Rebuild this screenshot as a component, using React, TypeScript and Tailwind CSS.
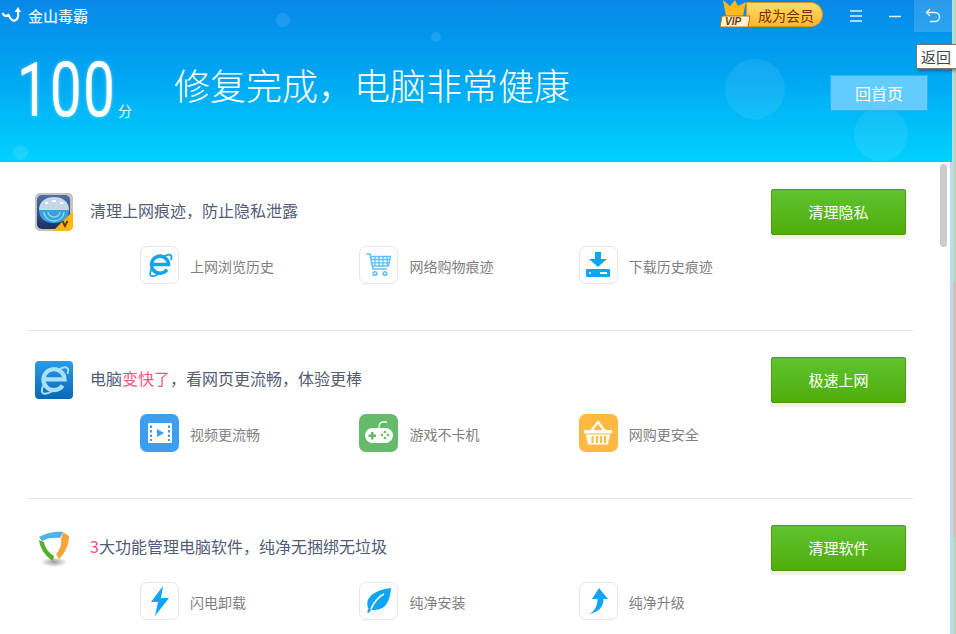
const cjk = "font-['Noto_Sans_CJK_SC','Liberation_Sans',sans-serif]";

function PrivacyIcon() {
  return (
    <svg width="38" height="38" viewBox="0 0 38 38">
      <defs>
        <linearGradient id="pv" x1="0" y1="0" x2="0" y2="1">
          <stop offset="0" stopColor="#4f6fa8" />
          <stop offset="1" stopColor="#1d2f63" />
        </linearGradient>
      </defs>
      <rect x="0" y="0" width="38" height="38" rx="5" fill="#c4c2bf" />
      <rect x="2" y="2" width="33" height="34" rx="5" fill="url(#pv)" />
      <path d="M4 17C4 8 11 4 19 4s15 4 15 13z" fill="#c4d8ea" />
      <path d="M4 17h30c0 9-7 13-15 13S4 26 4 17z" fill="#35a3de" />
      <path d="M9 19a10 9 0 0 0 20 0M13 19a6 5 0 0 0 12 0" fill="none" stroke="#8fd6f2" strokeWidth="1.300" />
      <path d="M10 10h3M17 8h4M25 10h3" stroke="#ffffff" strokeWidth="2" />
      <path d="M38 18v15a5 5 0 0 1-5 5H18z" fill="#fdb813" />
      <path d="M27.500 28l2.500 5 2.500-5" fill="none" stroke="#6b3d0a" strokeWidth="2" />
    </svg>
  );
}

function IeLargeIcon() {
  return (
    <svg width="38" height="38" viewBox="0 0 38 38">
      <defs>
        <linearGradient id="ieb" x1="0" y1="0" x2="0" y2="1">
          <stop offset="0" stopColor="#2c9be6" />
          <stop offset="1" stopColor="#0a67b8" />
        </linearGradient>
      </defs>
      <rect width="38" height="38" rx="4" fill="url(#ieb)" />
      <g transform="translate(3 3) scale(1.230)" fill="none" stroke="#a6e1f7">
        <path d="M20 17.500A8.500 8.500 0 1 1 21.500 12.500H6" strokeWidth="3.500" />
        <path d="M5 16C1 24 4 26 11 22.500M17 4.500c5-3 9-2.500 7 3.500" strokeWidth="1.600" />
      </g>
    </svg>
  );
}

function ShieldIcon() {
  return (
    <svg width="38" height="38" viewBox="0 0 38 38">
      <defs>
        <radialGradient id="sd">
          <stop offset="0" stopColor="#9a9a9a" />
          <stop offset="1" stopColor="#ffffff" />
        </radialGradient>
      </defs>
      <ellipse cx="19" cy="33" rx="13" ry="5" fill="url(#sd)" />
      <path d="M4 8C12 3 24 2 28 3l-3 6C18 8 12 9 7 12z" fill="#4cb4ea" />
      <path d="M28 3l6 4c0 9-4 17-10 23l-3-5c4-4 6-10 5-15z" fill="#f6a537" />
      <path d="M4 11l5 2c1 6 5 11 10 14l-1 5C10 27 5 19 4 11z" fill="#58ad2a" />
    </svg>
  );
}

function IeGlyph() {
  return (
    <svg width="26" height="26" viewBox="0 0 26 26" fill="none" stroke="#0ea5f5">
      <path d="M20 17.500A8.500 8.500 0 1 1 21.500 12.500H6" strokeWidth="3.500" />
      <path d="M5 16C1 24 4 26 11 22.500M17 4.500c5-3 9-2.500 7 3.500" strokeWidth="1.800" />
    </svg>
  );
}

function CartGlyph() {
  return (
    <svg width="26" height="26" viewBox="0 0 26 26" fill="none" stroke="#5cc1fb" strokeWidth="1.300">
      <path d="M0.500 2h3.500l3 15h14" strokeWidth="1.600" />
      <path d="M4.500 4.500h20l-2 9.500H6.500" />
      <path d="M9 4.500v9.500M13 4.500v9.500M17 4.500v9.500M21 4.500v9.500M5 7.500h19M6 10.800h17" />
      <circle cx="9" cy="21.500" r="1.800" strokeWidth="1.600" />
      <circle cx="19" cy="21.500" r="1.800" strokeWidth="1.600" />
    </svg>
  );
}

function DownloadGlyph() {
  return (
    <svg width="26" height="26" viewBox="0 0 26 26">
      <path d="M10 0h6v7h6l-9 8-9-8h6z" fill="#0ea5f5" />
      <rect x="1" y="17" width="24" height="8" rx="1" fill="#0ea5f5" />
      <rect x="15" y="20" width="7" height="2" fill="#ffffff" />
      <circle cx="5" cy="21" r="1" fill="#ffffff" />
    </svg>
  );
}

function VideoGlyph() {
  return (
    <svg width="26" height="26" viewBox="0 0 26 26">
      <rect x="1" y="3" width="24" height="20" rx="1" fill="#ffffff" />
      <path d="M3 5.500h2v2.500H3zM3 10h2v2.500H3zM3 14.500h2V17H3zM3 19h2v2H3zM21 5.500h2v2.500h-2zM21 10h2v2.500h-2zM21 14.500h2V17h-2zM21 19h2v2h-2z" fill="#3b9eef" />
      <path d="M10 9l7 4-7 4z" fill="#3b9eef" />
    </svg>
  );
}

function GameGlyph() {
  return (
    <svg width="30" height="26" viewBox="0 0 30 26">
      <path d="M15 8c0-4 1-6 4-6h4" fill="none" stroke="#ffffff" strokeWidth="1.400" />
      <rect x="1" y="8" width="28" height="15" rx="7.500" fill="#ffffff" />
      <path d="M7 12h2.500v2.500H12V17H9.500v2.500H7V17H4.500v-2.500H7z" fill="#66bb6a" />
      <circle cx="21" cy="12" r="1.300" fill="#66bb6a" />
      <circle cx="21" cy="18" r="1.300" fill="#66bb6a" />
      <circle cx="18" cy="15" r="1.300" fill="#66bb6a" />
      <circle cx="24" cy="15" r="1.300" fill="#66bb6a" />
    </svg>
  );
}

function BasketGlyph() {
  return (
    <svg width="28" height="26" viewBox="0 0 28 26">
      <path d="M7 11l7-9 7 9" fill="none" stroke="#ffffff" strokeWidth="2.200" />
      <rect x="0" y="10" width="28" height="3.500" fill="#ffffff" />
      <path d="M2 14.500h24l-2 10H4z" fill="#ffffff" />
      <path d="M7.500 16h2v7h-2zM12 16h2v7h-2zM16 16h2v7h-2zM20 16h2v7h-2z" fill="#fdb942" />
    </svg>
  );
}

function BoltGlyph() {
  return (
    <svg width="20" height="30" viewBox="0 0 20 30">
      <path d="M13 0L1 16h7L5 30l14-18h-8z" fill="#0ea5f5" />
    </svg>
  );
}

function LeafGlyph() {
  return (
    <svg width="26" height="26" viewBox="0 0 26 26">
      <path d="M25 0C24 10 22 22 8 22c-1 0-2 0-3-.5L3 25l-2-1 1.500-3C-1 14 2 3 25 0z" fill="#0ea5f5" />
      <path d="M5 21C8 14 12 9 18 6" fill="none" stroke="#ffffff" strokeWidth="1.500" />
    </svg>
  );
}

function ArrowGlyph() {
  return (
    <svg width="20" height="26" viewBox="0 0 20 26">
      <path d="M11 0l9 11h-4.500c0 7-4 13-14 15 5-3 8-8 8-15H4z" fill="#0ea5f5" />
    </svg>
  );
}

const outlined = "bg-white border border-[#e6e6e6]";

const sections = [
  {
    icon: <PrivacyIcon />,
    title: <>清理上网痕迹，防止隐私泄露</>,
    button: "清理隐私",
    items: [
      { label: "上网浏览历史", glyph: <IeGlyph />, bg: outlined },
      { label: "网络购物痕迹", glyph: <CartGlyph />, bg: outlined },
      { label: "下载历史痕迹", glyph: <DownloadGlyph />, bg: outlined },
    ],
  },
  {
    icon: <IeLargeIcon />,
    title: (
      <>
        电脑<span className="text-[#f4517d]">变快了</span>，看网页更流畅，体验更棒
      </>
    ),
    button: "极速上网",
    items: [
      { label: "视频更流畅", glyph: <VideoGlyph />, bg: "bg-[#3b9eef]" },
      { label: "游戏不卡机", glyph: <GameGlyph />, bg: "bg-[#66bb6a]" },
      { label: "网购更安全", glyph: <BasketGlyph />, bg: "bg-[#fdb942]" },
    ],
  },
  {
    icon: <ShieldIcon />,
    title: (
      <>
        <span className="text-[#f4517d]">3</span>大功能管理电脑软件，纯净无捆绑无垃圾
      </>
    ),
    button: "清理软件",
    items: [
      { label: "闪电卸载", glyph: <BoltGlyph />, bg: outlined },
      { label: "纯净安装", glyph: <LeafGlyph />, bg: outlined },
      { label: "纯净升级", glyph: <ArrowGlyph />, bg: outlined },
    ],
  },
];

function Section({ section, first }: { section: (typeof sections)[number]; first: boolean }) {
  return (
    <div className={`h-[168px] ${first ? "pt-[27px]" : "pt-[26px] border-t border-[#e4e4e4]"}`}>
      <div className="flex items-center justify-between px-[7px]">
        <div className="flex items-center gap-[17px]">
          {section.icon}
          <span className="text-base leading-6 pb-[5px] text-[#525c75]">{section.title}</span>
        </div>
        <button className="w-[135px] h-[46px] rounded-[2px] border border-[#4c9c0a] bg-gradient-to-b from-[#5fc32e] to-[#50ae05] text-[15px] text-white shadow-[0_4px_0_#f2f2f2]">
          {section.button}
        </button>
      </div>
      <div className="flex pl-[112px] mt-[11px]">
        {section.items.map((item) => (
          <div key={item.label} className="flex items-center w-[219.4px] gap-[11px]">
            <div className={`w-[39px] h-[38px] rounded-[7px] flex items-center justify-center ${item.bg}`}>
              {item.glyph}
            </div>
            <span className="text-sm pt-[1px] text-[#808080]">{item.label}</span>
          </div>
        ))}
      </div>
    </div>
  );
}

export default function App() {
  return (
    <div className={`flex h-[634px] w-[956px] overflow-hidden relative bg-white ${cjk}`}>
      <div className="w-[950px] shrink-0 flex flex-col">
        {/* Header */}
        <div className="h-[162px] w-[952px] shrink-0 relative overflow-hidden bg-gradient-to-b from-[#0888e8] via-[#00a8f2] to-[#00d2ff]">
          <div className="absolute left-[276px] top-[13px] w-[14px] h-[14px] rounded-full bg-white/10" />
          <div className="absolute left-[431px] top-[32px] w-[10px] h-[10px] rounded-full bg-white/10" />
          <div className="absolute left-[13px] top-[145px] w-[15px] h-[15px] rounded-full bg-white/10" />
          <div className="absolute left-[725px] top-[59px] w-[60px] h-[60px] rounded-full bg-white/[0.08]" />
          <div className="absolute left-[854px] top-[107px] w-[54px] h-[54px] rounded-full bg-white/[0.08]" />

          {/* Title bar */}
          <div className="relative flex items-center h-8">
            <svg className="ml-[1px]" width="20" height="20" viewBox="0 0 20 20" fill="none">
              <path d="M1.500 7c1.500 3.500 4 3.500 6 2 1.500 2.500 3 6.500 6.500 5.500 3-.8 3.500-5.500 3-10" stroke="#ffffff" strokeWidth="2.200" />
              <path d="M13.500 6l3.500-5 3 5z" fill="#ffffff" />
            </svg>
            <span className="ml-[7px] text-[15px] font-medium text-white/90">金山毒霸</span>
            <div className="ml-auto flex items-center h-8">
              <div className="relative flex items-center w-[103px] h-[32px]">
                <div className="absolute left-[26px] top-[2px] w-[77px] h-[25px] rounded-r-full rounded-l-[4px] border border-[#e0930f] bg-gradient-to-b from-[#ffdd66] to-[#fbb62c] flex items-center pl-[11px] text-sm text-[#7a2d05]">
                  成为会员
                </div>
                <svg className="absolute left-0 top-0" width="32" height="28" viewBox="0 0 32 28">
                  <path d="M6 16L3 0l7 6 5-6 3 6 8-4-3 14z" fill="#ffb81f" />
                  <path d="M2 16h28l-2 11H0z" fill="#fff3d0" stroke="#b5730f" />
                  <text x="5" y="25" fontSize="10" fontWeight="700" fontStyle="italic" fill="#6d3a0a" fontFamily="'Liberation Sans', sans-serif">VIP</text>
                </svg>
              </div>
              <div className="w-[91px] flex items-center gap-[27px] pl-[27px]">
                <svg width="12" height="12" viewBox="0 0 12 12" stroke="#dff3ff" strokeWidth="1.500">
                  <path d="M0 1h12M0 6h12M0 11h12" />
                </svg>
                <svg width="12" height="12" viewBox="0 0 12 12" stroke="#dff3ff" strokeWidth="1.500">
                  <path d="M0 6.500h12" />
                </svg>
              </div>
              <div className="w-[38px] h-8 bg-white/15 flex items-center justify-center">
                <svg width="16" height="16" viewBox="0 0 16 16" fill="none" stroke="#dff3ff" strokeWidth="1.400">
                  <path d="M5 1L1.500 4.500 5 8M1.500 4.500H10a4 4 0 0 1 0 9H5" />
                </svg>
              </div>
            </div>
          </div>

          {/* Score and message */}
          <div className="relative flex items-start pl-[17px] pt-[14px]">
            <div className="w-[97px]">
              <span className="inline-block origin-left scale-x-[0.74] text-[76px] leading-[88px] tracking-[2px] font-normal text-white font-['Roboto',sans-serif] [text-shadow:0_0_4px_rgba(255,255,255,0.5)]">
                100
              </span>
            </div>
            <span className="ml-[4px] mt-[54px] text-sm text-white/90">分</span>
            <span className="absolute left-[174px] top-[22px] text-[36px] leading-[60px] font-light text-white">
              修复完成，电脑非常健康
            </span>
            <button className="absolute left-[830px] top-[43px] w-[98px] h-[36px] bg-[#62ccff] border border-[#2cb4ef] text-base text-white">
              回首页
            </button>
          </div>
        </div>

        {/* Sections */}
        <div className="relative flex-1 pl-[28px] pr-[37px]">
          {sections.map((section, i) => (
            <Section key={section.button} section={section} first={i === 0} />
          ))}
          <div className="absolute left-[940px] top-[2px] w-[7px] h-[83px] rounded-full bg-[#cccccc]" />
        </div>
      </div>

      {/* Desktop edge behind the window */}
      <div className="w-[3px] shrink-0 bg-[#b8dcf5]" />
      <div className="w-[3px] shrink-0 flex flex-col">
        <div className="h-[283px] bg-[#bcd6bd]" />
        <div className="h-[254px] bg-[#d8bfb4]" />
        <div className="flex-1 bg-[#bcd6bd]" />
      </div>

      {/* Tooltip */}
      <div className="absolute left-[916px] top-[44px] w-[40px] h-[25px] bg-white border border-[#777777] border-r-0 pl-[4px] text-[15px] leading-[23px] text-[#444444] shadow-[2px_2px_3px_rgba(0,0,0,0.35)]">
        返回
      </div>
    </div>
  );
}
